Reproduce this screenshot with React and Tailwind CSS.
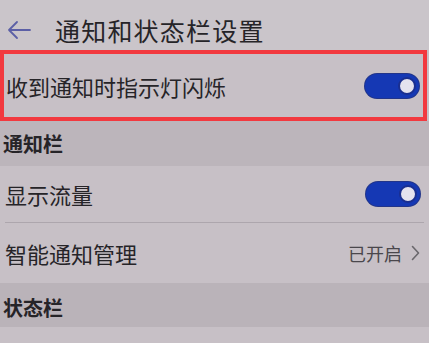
import React from "react";

const font = {
  fontFamily: '"Noto Sans CJK SC", "Noto Sans", sans-serif',
};

function Toggle() {
  return (
    <div className="w-[54px] h-[24px] rounded-full bg-[#1538b4] flex items-center justify-end pr-[3px] shadow-[0_0_0_1px_#22358a]">
      <div className="w-[18px] h-[18px] rounded-full bg-[#e4e2ee] border-2 border-[#1a2f90]" />
    </div>
  );
}

export default function App() {
  return (
    <div
      className="w-[429px] h-[343px] overflow-hidden bg-[#c7c0c6] text-[#262428]"
      style={font}
    >
      {/* Header */}
      <div className="h-[50px] pt-[10px] flex items-center bg-[#cac5ca]">
        <svg
          width="26"
          height="20"
          viewBox="0 0 26 20"
          className="ml-[6px]"
          fill="none"
          stroke="#5b5fa6"
          strokeWidth="1.8"
          strokeLinecap="round"
          strokeLinejoin="round"
        >
          <path d="M24 10H3M11 2L3 10l8 8" />
        </svg>
        <span className="ml-[23px] text-[25px] leading-none tracking-[1.2px]">
          通知和状态栏设置
        </span>
      </div>

      {/* Highlighted row */}
      <div className="h-[71px] w-[427px] border-4 border-[#f2393f] flex items-center justify-between pl-[2px] pr-[4px]">
        <span className="text-[22px] leading-none">收到通知时指示灯闪烁</span>
        <Toggle />
      </div>

      {/* Section: 通知栏 */}
      <div className="h-[45px] flex items-center px-[3px] bg-[#bcb5bb]">
        <span className="text-[20px] font-bold leading-none">通知栏</span>
      </div>

      <div className="h-[56px] flex items-center justify-between pl-[5px] pr-[9px]">
        <span className="text-[22px] leading-none">显示流量</span>
        <Toggle />
      </div>
      <div className="mx-[5px] h-px bg-[#ada6ad]" />

      <div className="h-[60px] flex items-center justify-between pl-[5px] pr-[9px]">
        <span className="text-[22px] leading-none">智能通知管理</span>
        <div className="flex items-center gap-[9px] text-[#4a474c]">
          <span className="text-[18px] leading-none">已开启</span>
          <svg
            width="9"
            height="16"
            viewBox="0 0 9 16"
            fill="none"
            stroke="#6a676c"
            strokeWidth="1.6"
            strokeLinecap="round"
            strokeLinejoin="round"
          >
            <path d="M1.5 1.5L7.5 8l-6 6.5" />
          </svg>
        </div>
      </div>

      {/* Section: 状态栏 */}
      <div className="h-[44px] pt-[6px] flex items-center px-[3px] bg-[#bab3b9]">
        <span className="text-[20px] font-bold leading-none">状态栏</span>
      </div>
    </div>
  );
}
